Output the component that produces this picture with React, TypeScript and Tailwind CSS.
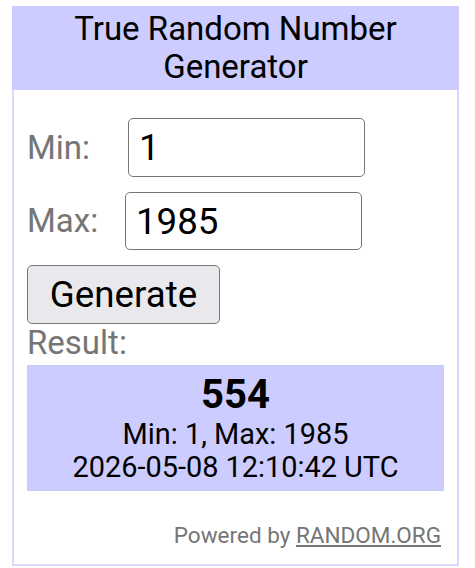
import { useState } from 'react';

export default function App() {
  const [min, setMin] = useState('1');
  const [max, setMax] = useState('1985');

  return (
    <div className="min-h-screen bg-white pt-[6px] pl-[12px] font-['Roboto',sans-serif]">
      <div className="w-[447px]">
        {/* Title bar */}
        <div className="bg-[#ccccff] py-[3.5px] text-center text-[33px] leading-[38.5px] text-black">
          True Random Number
          <br />
          Generator
        </div>

        {/* Form */}
        <div className="border-2 border-t-0 border-[#d9d9fb] px-[13px] pt-[28px] pb-[16px]">
          <div className="flex items-center">
            <span className="w-[101px] text-[33px] text-[#757575]">Min:</span>
            <input
              value={min}
              onChange={(e) => setMin(e.target.value)}
              className="h-[59px] w-[237px] rounded-[5px] border border-[#767676] px-[10px] text-[36.7px] text-black outline-none"
            />
          </div>
          <div className="mt-[15px] flex items-center">
            <span className="w-[98px] text-[33px] text-[#757575]">Max:</span>
            <input
              value={max}
              onChange={(e) => setMax(e.target.value)}
              className="h-[58px] w-[237px] rounded-[5px] border border-[#767676] px-[10px] text-[36.7px] text-black outline-none"
            />
          </div>

          <button className="mt-[15px] h-[59px] w-[193px] rounded-[5px] border border-[#767676] bg-[#e9e9ed] text-[36.7px] text-black">
            Generate
          </button>

          <div className="text-[33px] leading-[37px] text-[#757575]">Result:</div>

          {/* Result panel */}
          <div className="mt-[4px] flex h-[126px] flex-col items-center justify-center bg-[#ccccff] text-black">
            <div className="text-[40px] font-bold leading-[46px]">554</div>
            <div className="text-[28.9px] leading-[33px]">Min: 1, Max: 1985</div>
            <div className="text-[28.9px] leading-[33px]">2026-05-08 12:10:42 UTC</div>
          </div>

          <div className="mt-[31px] pr-[3px] text-right text-[22.5px] leading-[26px] text-[#757575]">
            Powered by{' '}
            <a href="#" className="underline">
              RANDOM.ORG
            </a>
          </div>
        </div>
      </div>
    </div>
  );
}
